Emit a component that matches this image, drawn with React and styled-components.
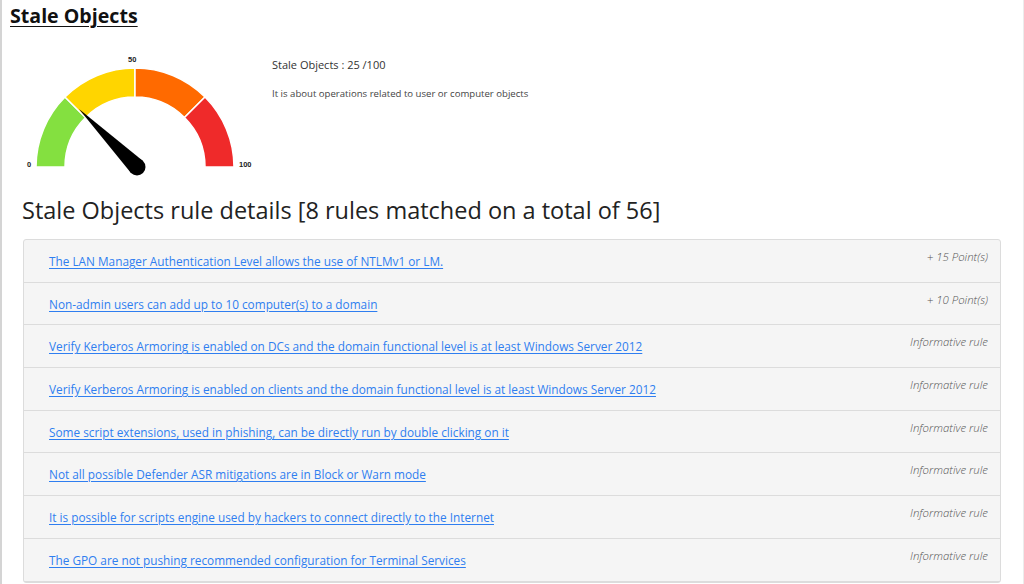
import React from "react";
import styled, { createGlobalStyle } from "styled-components";

const Global = createGlobalStyle`
  html, body { margin: 0; padding: 0; background: #fff; }
  body { font-family: "Open Sans", "Noto Sans", sans-serif; color: #333; }
  * { box-sizing: border-box; }
`;

const Page = styled.div`
  width: 1024px;
  height: 584px;
  overflow: hidden;
  border-left: 2px solid #d4d4d4;
  border-right: 1px solid #ececec;
  padding: 0 20px 0 8px;
`;

const Title = styled.h1`
  margin: 0;
  padding-top: 2px;
  font-size: 19.6px;
  line-height: 28px;
  font-weight: 700;
  text-decoration: underline;
  text-underline-offset: 3px;
  color: #111;
`;

const Summary = styled.section`
  display: flex;
  align-items: flex-start;
  margin-top: 22px;
  padding-left: 12px;
`;

const GaugeSvg = styled.svg`
  display: block;
  flex: none;
`;

const SummaryText = styled.div`
  padding-left: 10px;
  padding-top: 5px;
`;

const Score = styled.p`
  margin: 0;
  font-size: 11px;
  line-height: 16px;
  color: #333;
`;

const Description = styled.p`
  margin: 14px 0 0;
  font-size: 9.6px;
  line-height: 14px;
  color: #444;
`;

const Heading = styled.h2`
  margin: 14px 0 0;
  padding-left: 12px;
  font-size: 23.5px;
  line-height: 32px;
  font-weight: 400;
  color: #222;
`;

const RuleList = styled.div`
  margin: 13px 0 0 13px;
  width: 978px;
  border: 1px solid #dcdcdc;
  border-radius: 3px;
  background: #f5f5f5;
`;

const Row = styled.div`
  display: flex;
  align-items: center;
  justify-content: space-between;
  height: 42.7px;
  padding: 0 12px 0 25px;
  border-bottom: 1px solid #dcdcdc;
`;

const RuleLink = styled.a`
  font-size: 11.8px;
  color: #2f7ef0;
  text-decoration: underline;
  text-underline-offset: 2px;
  cursor: pointer;
`;

const Points = styled.span`
  align-self: flex-start;
  margin-top: 9px;
  font-size: 11.4px;
  font-style: italic;
  font-weight: 300;
  color: #555;
`;

const polar = (cx, cy, r, deg) => {
  const a = (deg * Math.PI) / 180;
  return [cx + r * Math.cos(a), cy - r * Math.sin(a)];
};

const segment = (cx, cy, r1, r2, a1, a2) => {
  const [x1, y1] = polar(cx, cy, r2, a1);
  const [x2, y2] = polar(cx, cy, r2, a2);
  const [x3, y3] = polar(cx, cy, r1, a2);
  const [x4, y4] = polar(cx, cy, r1, a1);
  return `M${x1} ${y1} A${r2} ${r2} 0 0 1 ${x2} ${y2} L${x3} ${y3} A${r1} ${r1} 0 0 0 ${x4} ${y4} Z`;
};

function Gauge({ value }) {
  const cx = 113;
  const cy = 115;
  const colors = ["#84e040", "#ffd500", "#ff6a00", "#ef2a2a"];
  const angle = 180 - (value / 100) * 180;
  return (
    <GaugeSvg width="240" height="128" viewBox="0 0 240 128">
      {colors.map((c, i) => (
        <path
          key={c}
          d={segment(cx, cy, 70, 99, 180 - i * 45, 180 - (i + 1) * 45)}
          fill={c}
          stroke="#fff"
          strokeWidth="1.5"
        />
      ))}
      <g transform={`translate(${cx + 2} ${cy}) rotate(${180 - angle})`}>
        <polygon points="-82,0 0,-8.5 0,8.5" fill="#000" />
        <circle cx="0" cy="0" r="8.5" fill="#000" />
      </g>
      <g fontFamily="'Liberation Sans', sans-serif" fontSize="7.5" fontWeight="700" fill="#222">
        <text x="5" y="115">0</text>
        <text x="106" y="10">50</text>
        <text x="217" y="115">100</text>
      </g>
    </GaugeSvg>
  );
}

const rules = [
  ["The LAN Manager Authentication Level allows the use of NTLMv1 or LM.", "+ 15 Point(s)"],
  ["Non-admin users can add up to 10 computer(s) to a domain", "+ 10 Point(s)"],
  ["Verify Kerberos Armoring is enabled on DCs and the domain functional level is at least Windows Server 2012", "Informative rule"],
  ["Verify Kerberos Armoring is enabled on clients and the domain functional level is at least Windows Server 2012", "Informative rule"],
  ["Some script extensions, used in phishing, can be directly run by double clicking on it", "Informative rule"],
  ["Not all possible Defender ASR mitigations are in Block or Warn mode", "Informative rule"],
  ["It is possible for scripts engine used by hackers to connect directly to the Internet", "Informative rule"],
  ["The GPO are not pushing recommended configuration for Terminal Services", "Informative rule"],
];

export default function App() {
  return (
    <Page>
      <Global />
      <Title>Stale Objects</Title>
      <Summary>
        <Gauge value={25} />
        <SummaryText>
          <Score>Stale Objects : 25 /100</Score>
          <Description>It is about operations related to user or computer objects</Description>
        </SummaryText>
      </Summary>
      <Heading>Stale Objects rule details [8 rules matched on a total of 56]</Heading>
      <RuleList>
        {rules.map(([text, pts]) => (
          <Row key={text}>
            <RuleLink>{text}</RuleLink>
            <Points>{pts}</Points>
          </Row>
        ))}
      </RuleList>
    </Page>
  );
}
